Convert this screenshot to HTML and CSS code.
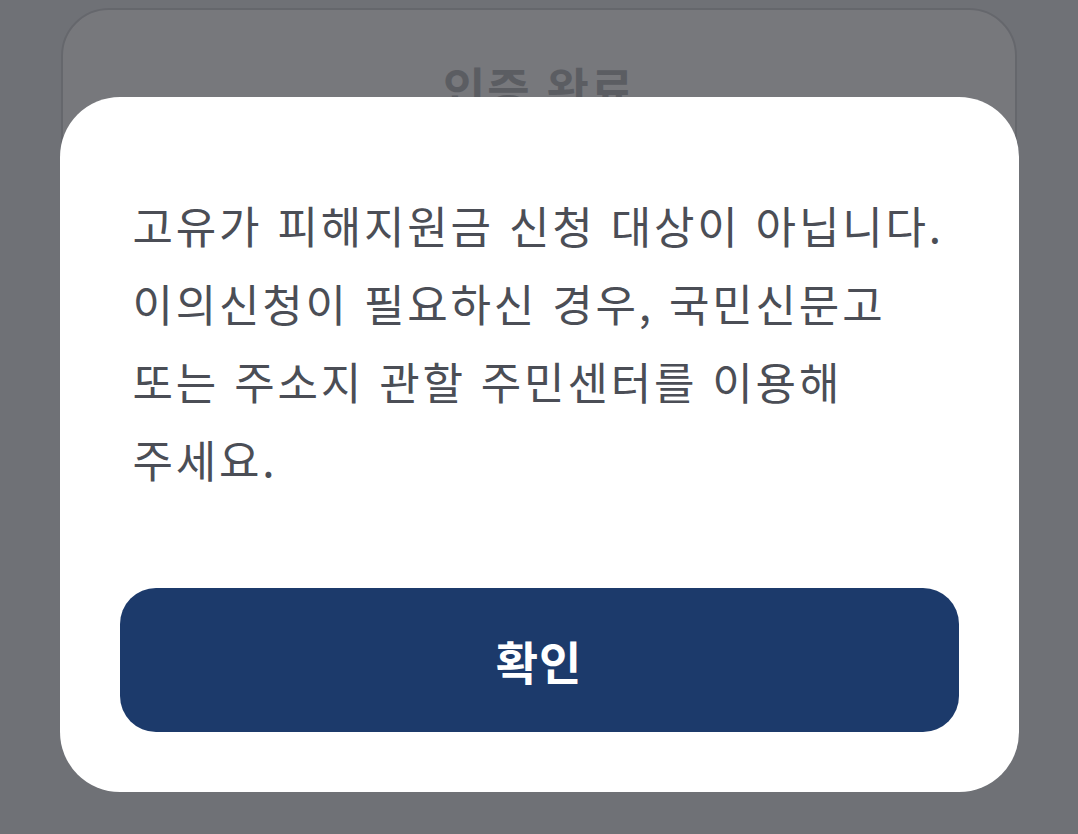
FILE: index.html
```html
<!DOCTYPE html>
<html lang="ko">
<head>
<meta charset="utf-8">
<link rel="stylesheet" href="styles.css">
</head>
<body>
<div class="page">
  <div class="bg-card">
    <div class="bg-title">인증 완료</div>
  </div>
</div>
<div class="overlay">
  <div class="modal">
    <p class="message">고유가 피해지원금 신청 대상이 아닙니다. 이의신청이 필요하신 경우, 국민신문고 또는 주소지 관할 주민센터를 이용해 주세요.</p>
    <button class="confirm">확인</button>
  </div>
</div>
</body>
</html>
```

FILE: styles.css
```css
html, body {
  margin: 0;
  padding: 0;
  width: 1078px;
  height: 834px;
  overflow: hidden;
  font-family: "Noto Sans CJK KR", "Noto Sans", sans-serif;
}
body {
  position: relative;
  background: #eceef1;
}
.page {
  padding: 8px 61px 0 61px;
}
.bg-card {
  height: 300px;
  border: 2px solid #d4d5d9;
  border-radius: 48px;
  background: #fff;
  display: flex;
  justify-content: center;
  padding-top: 46px;
  box-sizing: border-box;
}
.bg-title {
  font-size: 46px;
  font-weight: 700;
  color: #bcbdc1;
  line-height: 60px;
  letter-spacing: 2px;
}
.overlay {
  position: absolute;
  inset: 0;
  background: rgba(24, 26, 32, 0.59);
  display: flex;
  justify-content: center;
  align-items: flex-start;
  padding-top: 97px;
}
.modal {
  width: 959px;
  box-sizing: border-box;
  background: #fff;
  border-radius: 60px;
  padding: 89px 60px 60px 60px;
  display: flex;
  flex-direction: column;
}
.message {
  margin: 0 13px 90px 13px;
  font-size: 44px;
  line-height: 78px;
  color: #4b4e56;
  letter-spacing: 2.8px;
  word-break: keep-all;
}
.confirm {
  height: 144px;
  border: none;
  border-radius: 36px;
  background: #1c3a6b;
  color: #fff;
  font-family: "Noto Sans CJK KR", "Noto Sans", sans-serif;
  font-size: 46px;
  font-weight: 700;
  letter-spacing: 1px;
  cursor: pointer;
}
```
